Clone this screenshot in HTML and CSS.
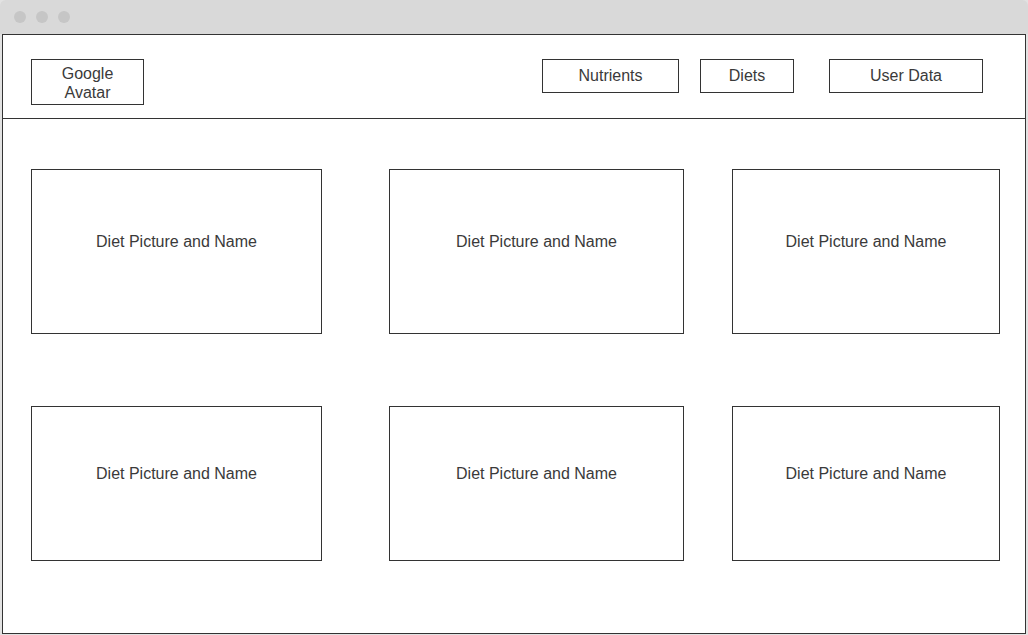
FILE: index.html
```html
<!DOCTYPE html>
<html lang="en">
<head>
  <meta charset="UTF-8" />
  <meta name="viewport" content="width=device-width, initial-scale=1.0" />
  <title>Diets</title>
  <link rel="stylesheet" href="styles.css">
</head>
<body>
  <div class="titlebar">
    <span class="dot"></span>
    <span class="dot"></span>
    <span class="dot"></span>
  </div>
  <div class="page">
    <header>
      <div class="avatar">Google<br>Avatar</div>
      <nav>
        <a class="nav-nutrients" href="#">Nutrients</a>
        <a class="nav-diets" href="#">Diets</a>
        <a class="nav-user" href="#">User Data</a>
      </nav>
    </header>
    <main>
      <div class="card-grid">
        <div class="card">Diet Picture and Name</div>
        <div class="card">Diet Picture and Name</div>
        <div class="card">Diet Picture and Name</div>
        <div class="card">Diet Picture and Name</div>
        <div class="card">Diet Picture and Name</div>
        <div class="card">Diet Picture and Name</div>
      </div>
    </main>
  </div>
</body>
</html>
```

FILE: styles.css
```css
body {
  margin: 0;
  background-color: #e2e2e2;
  font-family: "Liberation Sans", Arial, sans-serif;
  font-size: 16px;
  color: #3a3a3a;
}
.titlebar {
  height: 34px;
  background-color: #d9d9d9;
  border-radius: 6px 6px 0 0;
  display: flex;
  align-items: center;
  gap: 10px;
  padding-left: 14px;
  box-sizing: border-box;
}
.dot {
  width: 12px;
  height: 12px;
  border-radius: 50%;
  background-color: #c6c6c6;
}
.page {
  margin: 0 2px;
  height: 600px;
  box-sizing: border-box;
  border: 1px solid #333;
  background-color: #fff;
}
header {
  height: 84px;
  box-sizing: border-box;
  border-bottom: 1px solid #333;
  padding: 24px 42px 0 28px;
  display: flex;
  justify-content: space-between;
  align-items: flex-start;
}
.avatar {
  width: 113px;
  height: 46px;
  box-sizing: border-box;
  border: 1px solid #333;
  text-align: center;
  line-height: 19px;
  padding-top: 4px;
}
nav {
  display: flex;
}
nav a {
  height: 34px;
  box-sizing: border-box;
  border: 1px solid #333;
  display: flex;
  align-items: center;
  justify-content: center;
  color: #3a3a3a;
  text-decoration: none;
}
.nav-nutrients {
  width: 137px;
}
.nav-diets {
  width: 94px;
  margin-left: 21px;
}
.nav-user {
  width: 154px;
  margin-left: 35px;
}
main {
  padding: 50px 25px 0 28px;
}
.card-grid {
  display: grid;
  grid-template-columns: 358px 343px 268px;
  grid-template-rows: 165px 155px;
  row-gap: 72px;
}
.card {
  box-sizing: border-box;
  border: 1px solid #333;
  display: flex;
  align-items: center;
  justify-content: center;
  padding-bottom: 20px;
}
.card:nth-child(3n+1) {
  width: 291px;
}
.card:nth-child(3n+2) {
  width: 295px;
}
```
